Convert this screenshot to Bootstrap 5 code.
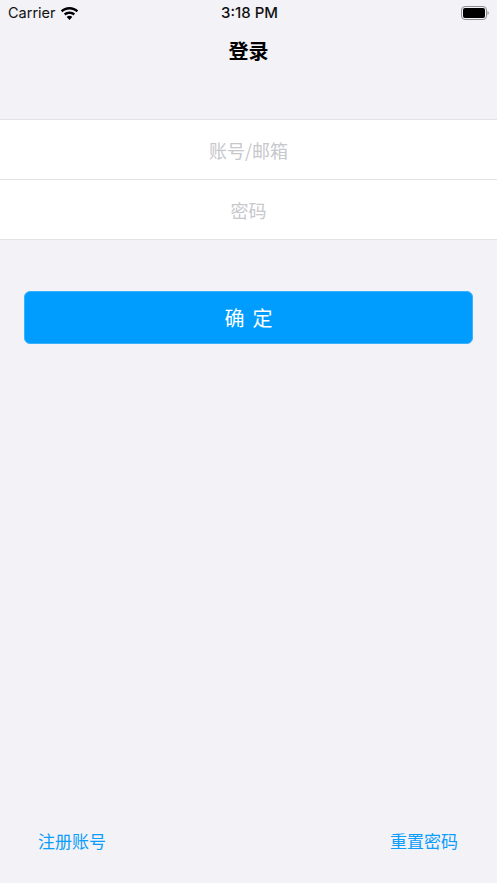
<!DOCTYPE html>
<html lang="zh">
<head>
<meta charset="utf-8">
<title>登录</title>
<link rel="stylesheet" href="https://cdn.jsdelivr.net/npm/bootstrap@5.3.0/dist/css/bootstrap.min.css">
<style>
html, body { height: 100%; }
body { background: #f2f2f7; font-family: "Liberation Sans", "Noto Sans CJK SC", sans-serif; overflow: hidden; }
.screen { height: 883px; }
.status-bar { height: 26px; padding: 0 8px; font-size: 15px; color: #111; position: relative; }
.status-time { font-family: Inter, "Liberation Sans", sans-serif; font-weight: 500; flex: 1; text-align: center; padding-left: 2px; }
.status-left, .status-right { width: 170px; }
.carrier { font-family: Inter, "Liberation Sans", sans-serif; font-size: 14.5px; }
.nav-title { height: 50px; font-size: 20px; font-weight: 700; color: #000; font-family: "Noto Sans CJK SC", sans-serif; padding-bottom: 1px; }
.field-group { margin-top: 43px; background: #fff; border-top: 1px solid #e3e3e6; border-bottom: 1px solid #e3e3e6; }
.field-group .form-control { height: 59px; border: 0; border-radius: 0; background: transparent; text-align: center; font-size: 18px; font-family: "Noto Sans CJK SC", sans-serif; box-shadow: none; padding: 0 12px; }
.field-group .form-control::placeholder { color: #c7c7cc; opacity: 1; }
.field-sep { height: 1px; background: #e3e3e6; }
.btn-confirm { margin: 51px 24px 0; height: 53px; background: #009dff; border: 1px solid #3ab1ff; border-radius: 6px; color: #fff; font-size: 20px; letter-spacing: 8px; padding: 0 0 0 8px; font-family: "Noto Sans CJK SC", sans-serif; }
.btn-confirm:hover { background: #009dff; color: #fff; }
.foot-links { padding: 0 39px 27px 38px; font-size: 17px; font-family: "Noto Sans CJK SC", sans-serif; }
.foot-links a { color: #0a9dfb; text-decoration: none; line-height: 30px; }
</style>
</head>
<body>
<div class="screen d-flex flex-column">
  <div class="status-bar d-flex align-items-center">
    <div class="status-left d-flex align-items-center gap-1">
      <span class="carrier">Carrier</span>
      <svg width="19" height="15" viewBox="0 0 19 15" aria-hidden="true">
        <path d="M9.5 1C6 1 3 2.3.8 4.4l1.7 1.9C4.3 4.6 6.8 3.6 9.5 3.6s5.2 1 7 2.7l1.7-1.9C16 2.3 13 1 9.5 1z" fill="#000"/>
        <path d="M9.5 5.4c-2.2 0-4.2.8-5.6 2.2l1.7 1.9c1-1 2.4-1.5 3.9-1.5s2.9.5 3.9 1.5l1.7-1.9C13.7 6.2 11.7 5.4 9.5 5.4z" fill="#000"/>
        <path d="M9.5 9.8c-1.1 0-2.1.4-2.8 1.1l2.8 3.1 2.8-3.1c-.7-.7-1.7-1.1-2.8-1.1z" fill="#000"/>
      </svg>
    </div>
    <div class="status-time">3:18 PM</div>
    <div class="status-right d-flex justify-content-end align-items-center">
      <svg width="28" height="14" viewBox="0 0 28 14" aria-hidden="true">
        <rect x=".5" y=".5" width="25" height="13" rx="3.5" fill="none" stroke="#8e8e8e"/>
        <rect x="2" y="2" width="22" height="10" rx="2" fill="#000"/>
        <path d="M26.5 5v4c.8-.3 1.2-1.1 1.2-2s-.4-1.700-1.200-2z" fill="#8e8e8e"/>
      </svg>
    </div>
  </div>
  <div class="nav-title d-flex align-items-center justify-content-center">登录</div>
  <form class="field-group">
    <input class="form-control" type="text" placeholder="账号/邮箱">
    <div class="field-sep"></div>
    <input class="form-control" type="password" placeholder="密码">
  </form>
  <button type="button" class="btn btn-confirm">确定</button>
  <div class="foot-links mt-auto d-flex justify-content-between">
    <a href="#">注册账号</a>
    <a href="#">重置密码</a>
  </div>
</div>
<script src="https://cdn.jsdelivr.net/npm/bootstrap@5.3.0/dist/js/bootstrap.bundle.min.js"></script>
</body>
</html>
